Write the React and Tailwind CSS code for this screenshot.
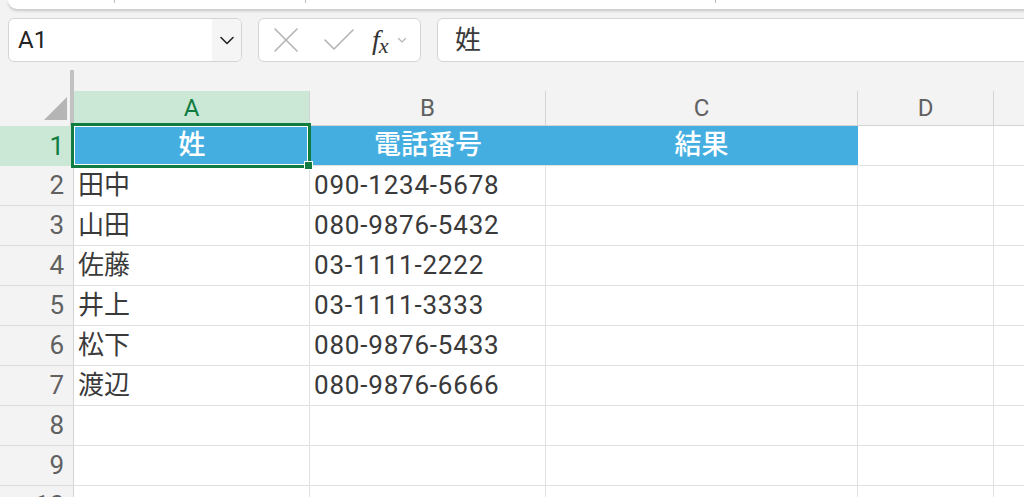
import React from "react";

const rows = [
  ["田中", "090-1234-5678"],
  ["山田", "080-9876-5432"],
  ["佐藤", "03-1111-2222"],
  ["井上", "03-1111-3333"],
  ["松下", "080-9876-5433"],
  ["渡辺", "080-9876-6666"],
  ["", ""],
  ["", ""],
  ["", ""],
];

const FONT = { fontFamily: 'Roboto, "Noto Sans CJK JP", sans-serif' };

function RowHeader({ n, active }) {
  return (
    <div
      className={
        "w-[74px] shrink-0 h-full flex items-center justify-end pr-[9px] border-r border-[#d4d4d4] text-[26px] " +
        (active ? "bg-[#cae8d5] text-[#107c41]" : "bg-[#f3f3f3] text-[#616161]")
      }
    >
      {n}
    </div>
  );
}

export default function App() {
  return (
    <div className="w-[1024px] h-[497px] overflow-hidden bg-[#f3f3f3] relative" style={FONT}>
      {/* top bar */}
      <div className="relative h-[9px] ml-[8px] mr-[-20px] bg-white rounded-bl-[12px] shadow-[0_2px_3px_rgba(0,0,0,0.18)]">
        <div className="absolute left-[106px] top-0 w-px h-[3px] bg-[#bdbdbd]" />
        <div className="absolute left-[297px] top-0 w-px h-[3px] bg-[#bdbdbd]" />
        <div className="absolute left-[707px] top-0 w-px h-[3px] bg-[#bdbdbd]" />
      </div>

      {/* formula row */}
      <div className="mt-[9px] flex h-[44px] pl-[8px]">
        <div className="w-[234px] flex rounded-[6px] border border-[#d4d4d4] bg-white overflow-hidden">
          <div className="flex-1 flex items-center pl-[9px] text-[24px] text-[#242424]">A1</div>
          <div className="w-[29px] bg-[#f5f5f5] flex items-center justify-center">
            <svg width="18" height="18" viewBox="0 0 18 18" fill="none">
              <path d="M3 6.5 L9 12.5 L15 6.5" stroke="#242424" strokeWidth="1.6" strokeLinecap="round" strokeLinejoin="round" />
            </svg>
          </div>
        </div>
        <div className="ml-[16px] w-[163px] flex items-center rounded-[6px] border border-[#d4d4d4] bg-white">
          <svg className="ml-[14px]" width="26" height="26" viewBox="0 0 26 26" fill="none">
            <path d="M2 2 L24 24 M24 2 L2 24" stroke="#b3b3b3" strokeWidth="1.6" strokeLinecap="round" />
          </svg>
          <svg className="ml-[24px]" width="32" height="24" viewBox="0 0 32 24" fill="none">
            <path d="M2 12 L11 21 L30 2" stroke="#b3b3b3" strokeWidth="1.6" strokeLinecap="round" strokeLinejoin="round" />
          </svg>
          <div className="ml-[17px] flex items-end text-[#333] leading-none" style={{ fontFamily: '"Liberation Serif", serif' }}>
            <span className="italic text-[28px]">f</span>
            <span className="italic text-[22px] ml-[-1px] mb-[-3px]">x</span>
          </div>
          <svg className="ml-[8px]" width="10" height="8" viewBox="0 0 10 8" fill="none">
            <path d="M1.5 2.5 L5 6 L8.5 2.5" stroke="#b3b3b3" strokeWidth="1.1" strokeLinecap="round" strokeLinejoin="round" />
          </svg>
        </div>
        <div className="ml-[16px] flex-1 mr-[-20px] flex items-center pl-[17px] rounded-[6px] border border-[#d4d4d4] bg-white text-[26px] text-[#3a3a3a]">
          姓
        </div>
      </div>

      {/* grid */}
      <div className="mt-[8px]">
        {/* column header row */}
        <div className="flex h-[56px]">
          <div className="w-[74px] shrink-0 relative">
            <div className="absolute right-0 top-0 w-[4px] h-full bg-[#c2c2c2]" />
            <svg className="absolute left-[44px] top-[27px]" width="23" height="23" viewBox="0 0 23 23">
              <path d="M23 0 L23 23 L0 23 Z" fill="#b5b5b5" />
            </svg>
          </div>
          <div className="flex-1 flex pt-[21px]">
            <div className="w-[236px] shrink-0 flex items-center justify-center bg-[#cae8d5] border-r border-b-2 border-b-[#107c41] border-r-[#d4d4d4] text-[24px] text-[#107c41]">
              A
            </div>
            <div className="w-[236px] shrink-0 flex items-center justify-center border-r border-b border-[#d4d4d4] text-[24px] text-[#616161]">
              B
            </div>
            <div className="w-[312px] shrink-0 flex items-center justify-center border-r border-b border-[#d4d4d4] text-[24px] text-[#616161]">
              C
            </div>
            <div className="w-[136px] shrink-0 flex items-center justify-center border-r border-b border-[#d4d4d4] text-[24px] text-[#616161]">
              D
            </div>
            <div className="flex-1 border-b border-[#d4d4d4]" />
          </div>
        </div>

        {/* row 1 */}
        <div className="flex h-[40px]">
          <RowHeader n={1} active />
          <div className="flex-1 flex bg-white border-b border-[#e1e1e1]">
            <div className="relative w-[236px] shrink-0 flex items-center justify-center bg-[#44aee1] text-white text-[27px] font-medium">
              姓
              <div className="absolute left-[-3px] top-[-3px] w-[240px] h-[45px] border-[3px] border-[#107c41] shadow-[inset_0_0_0_1px_#ffffff]" />
              <div className="absolute left-[230px] top-[35px] w-[9px] h-[9px] bg-[#107c41] border border-white" />
            </div>
            <div className="w-[236px] shrink-0 flex items-center justify-center bg-[#44aee1] text-white text-[27px] font-medium">
              電話番号
            </div>
            <div className="w-[312px] shrink-0 flex items-center justify-center bg-[#44aee1] text-white text-[27px] font-medium border-r border-[#44aee1]">
              結果
            </div>
            <div className="w-[136px] shrink-0 border-r border-[#e1e1e1]" />
            <div className="flex-1" />
          </div>
        </div>

        {rows.map((r, i) => (
          <div key={i} className="flex h-[40px]">
            <div className="h-full border-b border-[#dcdcdc]">
              <RowHeader n={i + 2} />
            </div>
            <div className="flex-1 flex bg-white border-b border-[#e1e1e1] text-[26px] text-[#3a3a3a]">
              <div className="w-[236px] shrink-0 flex items-center pl-[4px] border-r border-[#e1e1e1]">{r[0]}</div>
              <div className="w-[236px] shrink-0 flex items-center pl-[4px] border-r border-[#e1e1e1] tracking-[0.8px]">{r[1]}</div>
              <div className="w-[312px] shrink-0 border-r border-[#e1e1e1]" />
              <div className="w-[136px] shrink-0 border-r border-[#e1e1e1]" />
              <div className="flex-1" />
            </div>
          </div>
        ))}
      </div>
    </div>
  );
}
